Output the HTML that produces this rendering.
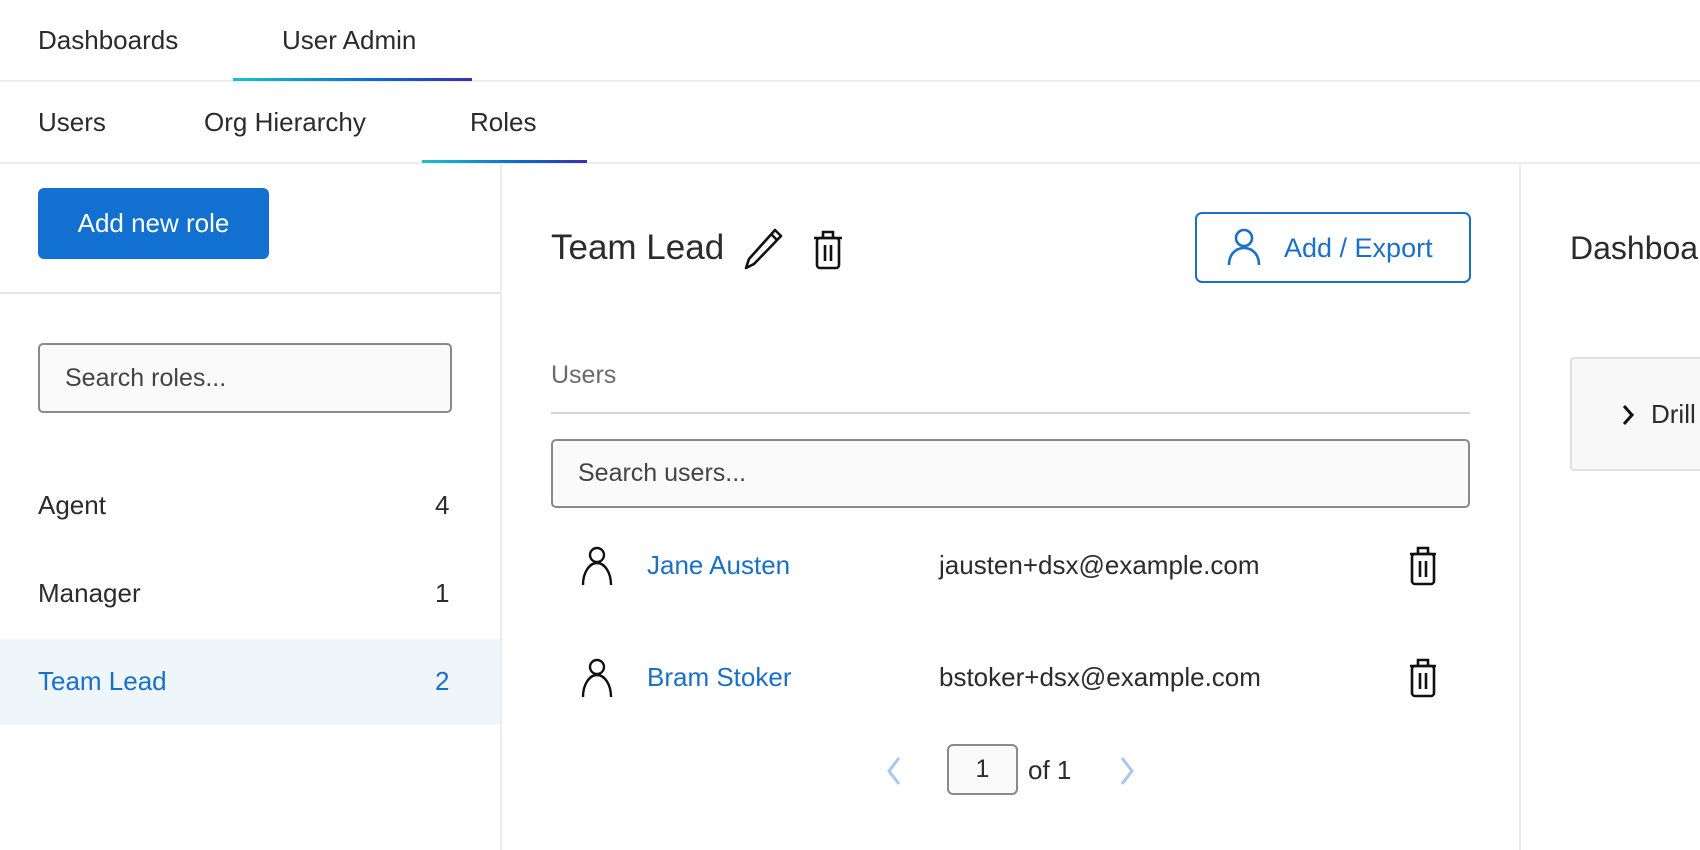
<!DOCTYPE html>
<html><head><meta charset="utf-8"><style>
*{margin:0;padding:0;box-sizing:border-box}
body{width:1700px;height:850px;background:#fff;font-family:"Liberation Sans",Arial,sans-serif;color:#2b2b2b;position:relative;overflow:hidden}
.a{position:absolute;white-space:nowrap}
.t{height:40px;line-height:40px;font-size:26px}
.grad{background:linear-gradient(90deg,#1cc1c9,#0b6ad0 60%,#3a2fb0)}
.inp{position:absolute;border:2px solid #8a8a8a;border-radius:5px;background:#fafafa;font-size:25px;color:#444;padding-left:25px;display:flex;align-items:center}
svg{position:absolute}
</style></head><body>
<div class="a t" style="left:38px;top:20px">Dashboards</div>
<div class="a t" style="left:282px;top:20px">User Admin</div>
<div class="a" style="left:0;top:80px;width:1700px;height:2px;background:#ececec"></div>
<div class="a grad" style="left:233px;top:78px;width:239px;height:3px"></div>

<div class="a t" style="left:38px;top:102px">Users</div>
<div class="a t" style="left:204px;top:102px">Org Hierarchy</div>
<div class="a t" style="left:470px;top:102px">Roles</div>
<div class="a" style="left:0;top:162px;width:1700px;height:2px;background:#ececec"></div>
<div class="a grad" style="left:422px;top:160px;width:165px;height:3px"></div>

<div class="a" style="left:500px;top:164px;width:2px;height:686px;background:#ececec"></div>
<div class="a" style="left:1519px;top:164px;width:2px;height:686px;background:#ececec"></div>

<div class="a" style="left:38px;top:188px;width:231px;height:71px;background:#1170d0;border-radius:6px;color:#fff;font-size:26px;line-height:71px;text-align:center">Add new role</div>
<div class="a" style="left:0;top:292px;width:500px;height:2px;background:#e6e6e6"></div>
<div class="inp" style="left:38px;top:343px;width:414px;height:70px">Search roles...</div>
<div class="a t" style="left:38px;top:485px">Agent</div><div class="a t" style="left:435px;top:485px">4</div>
<div class="a t" style="left:38px;top:573px">Manager</div><div class="a t" style="left:435px;top:573px">1</div>
<div class="a" style="left:0;top:639px;width:500px;height:86px;background:#eef5fb"></div>
<div class="a t" style="left:38px;top:661px;color:#1a6fc6">Team Lead</div><div class="a t" style="left:435px;top:661px;color:#1a6fc6">2</div>

<div class="a" style="left:551px;top:226px;font-size:35px;line-height:44px">Team Lead</div>
<svg style="left:742px;top:228px" width="42" height="42" viewBox="0 0 42 42" fill="none" stroke="#111" stroke-width="2.6" stroke-linejoin="round"><path d="M33 2l6 6L12 36 4 40l3-9z"/><path d="M29 6l6 6"/></svg>
<svg style="left:812px;top:228px" width="32" height="42" viewBox="0 0 32 42" fill="none" stroke="#111" stroke-width="2.6"><path d="M2 10h28M11 10V4h10v6"/><rect x="5" y="10" width="22" height="30" rx="3"/><path d="M13 17v16M19 17v16"/></svg>

<div class="a" style="left:1195px;top:212px;width:276px;height:71px;border:2px solid #1a6fc6;border-radius:7px"></div>
<svg style="left:1227px;top:228px" width="34" height="38" viewBox="0 0 34 38" fill="none" stroke="#1a6fc6" stroke-width="2.6"><circle cx="17" cy="10" r="8"/><path d="M2 37c0-10 6-17 15-17s15 7 15 17"/></svg>
<div class="a" style="left:1284px;top:228px;font-size:27px;line-height:40px;color:#1a6fc6">Add / Export</div>

<div class="a" style="left:551px;top:360px;font-size:25px;line-height:30px;color:#6b6b6b">Users</div>
<div class="a" style="left:551px;top:412px;width:919px;height:2px;background:#d6d6d6"></div>
<div class="inp" style="left:551px;top:439px;width:919px;height:69px">Search users...</div>

<svg style="left:580px;top:546px" width="34" height="40" viewBox="0 0 34 40" fill="none" stroke="#111" stroke-width="2.4"><circle cx="17" cy="9" r="7"/><path d="M3 39c0-12 6-22 14-22s14 10 14 22"/></svg>
<div class="a t" style="left:647px;top:545px;color:#1a6fc6">Jane Austen</div>
<div class="a t" style="left:939px;top:545px">jausten+dsx@example.com</div>
<svg style="left:1408px;top:544px" width="30" height="42" viewBox="0 0 30 42" fill="none" stroke="#111" stroke-width="2.6"><path d="M2 10h26M10 10V4h10v6"/><rect x="4" y="10" width="22" height="30" rx="3"/><path d="M12 17v16M18 17v16"/></svg>

<svg style="left:580px;top:658px" width="34" height="40" viewBox="0 0 34 40" fill="none" stroke="#111" stroke-width="2.4"><circle cx="17" cy="9" r="7"/><path d="M3 39c0-12 6-22 14-22s14 10 14 22"/></svg>
<div class="a t" style="left:647px;top:657px;color:#1a6fc6">Bram Stoker</div>
<div class="a t" style="left:939px;top:657px">bstoker+dsx@example.com</div>
<svg style="left:1408px;top:656px" width="30" height="42" viewBox="0 0 30 42" fill="none" stroke="#111" stroke-width="2.6"><path d="M2 10h26M10 10V4h10v6"/><rect x="4" y="10" width="22" height="30" rx="3"/><path d="M12 17v16M18 17v16"/></svg>

<svg style="left:884px;top:755px" width="20" height="32" viewBox="0 0 20 32" fill="none" stroke="#a8c8ee" stroke-width="3"><path d="M15 3L5 16l10 13"/></svg>
<div class="a" style="left:947px;top:744px;width:71px;height:51px;border:2px solid #8a8a8a;border-radius:6px;background:#fafafa;font-size:25px;line-height:47px;text-align:center">1</div>
<div class="a t" style="left:1028px;top:750px">of 1</div>
<svg style="left:1117px;top:755px" width="20" height="32" viewBox="0 0 20 32" fill="none" stroke="#a8c8ee" stroke-width="3"><path d="M5 3l10 13L5 29"/></svg>

<div class="a" style="left:1570px;top:226px;font-size:32px;line-height:44px">Dashboards</div>
<div class="a" style="left:1570px;top:357px;width:140px;height:114px;border:2px solid #e0e0e0;border-radius:4px;background:#f8f8f8"></div>
<svg style="left:1620px;top:403px" width="16" height="24" viewBox="0 0 16 24" fill="none" stroke="#111" stroke-width="3"><path d="M4 3l8 9-8 9"/></svg>
<div class="a t" style="left:1651px;top:394px">Drill</div>
</body></html>
